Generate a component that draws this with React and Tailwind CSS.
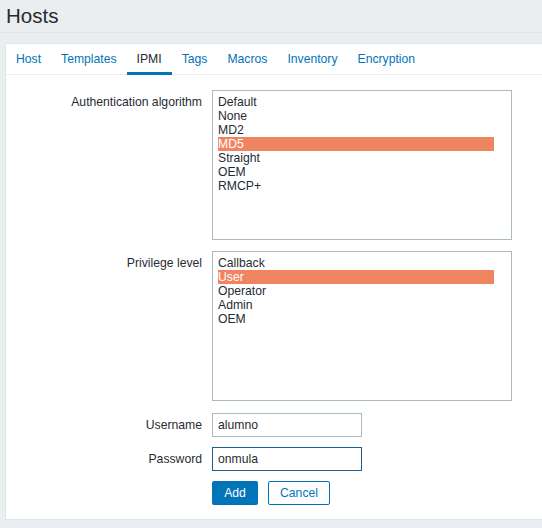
import React from 'react';

const tabs = ['Host', 'Templates', 'IPMI', 'Tags', 'Macros', 'Inventory', 'Encryption'];
const authOptions = ['Default', 'None', 'MD2', 'MD5', 'Straight', 'OEM', 'RMCP+'];
const privOptions = ['Callback', 'User', 'Operator', 'Admin', 'OEM'];

const ListBox = ({ options, selected }) => (
    <div className="w-[300px] h-[150px] border border-[#acbbc2] bg-white pl-[5px] pr-[17px] pt-[4px]">
        {options.map((opt) => (
            <div
                key={opt}
                className={`leading-[14px] h-[14px] ${opt === selected ? 'bg-[#f08360] text-white' : ''}`}
            >
                {opt}
            </div>
        ))}
    </div>
);

const App = () => {
    return (
        <div
            className="w-[542px] h-[528px] bg-[#ebeef0] overflow-hidden text-[12.2px] text-[#1f2c33]"
            style={{ fontFamily: '"Liberation Sans", Arial, sans-serif' }}
        >
            {/* Page header */}
            <div className="h-[33px] border-b border-[#dfe4e7] px-[6px] pt-[4px]">
                <h1 className="text-[20.5px] leading-[24px] font-normal">Hosts</h1>
            </div>

            {/* Form panel */}
            <div className="mt-[10px] ml-[5px] w-[560px] h-[477px] bg-white border border-[#dfe4e7]">
                <div className="flex h-[31px] border-b border-[#ebeef0]">
                    {tabs.map((tab) => (
                        <div
                            key={tab}
                            className={`px-[10px] flex items-center h-[31px] ${
                                tab === 'IPMI'
                                    ? 'border-b-[3px] border-[#0275b8] text-[#1f2c33] pt-[3px]'
                                    : 'text-[#0275b8]'
                            }`}
                        >
                            {tab}
                        </div>
                    ))}
                </div>

                <div className="grid grid-cols-[196px_1fr] gap-x-[10px] mt-[15px]">
                    <div className="text-right pt-[5px] leading-[14px]">Authentication algorithm</div>
                    <ListBox options={authOptions} selected="MD5" />

                    <div className="text-right pt-[5px] leading-[14px] mt-[11px]">Privilege level</div>
                    <div className="mt-[11px]">
                        <ListBox options={privOptions} selected="User" />
                    </div>

                    <div className="text-right mt-[12px] h-[24px] leading-[24px]">Username</div>
                    <div className="mt-[12px]">
                        <div className="w-[150px] h-[24px] border border-[#acbbc2] px-[5px] leading-[22px]">alumno</div>
                    </div>

                    <div className="text-right mt-[10px] h-[24px] leading-[24px]">Password</div>
                    <div className="mt-[10px]">
                        <div className="w-[150px] h-[24px] border border-[#1e5f91] px-[5px] leading-[22px]">onmula</div>
                    </div>

                    <div />
                    <div className="flex gap-[10px] mt-[10px]">
                        <button className="w-[46px] h-[24px] bg-[#0275b8] text-white rounded-[2px] text-[12.2px]">Add</button>
                        <button className="w-[62px] h-[24px] bg-white border border-[#0275b8] text-[#0275b8] rounded-[2px] text-[12.2px]">Cancel</button>
                    </div>
                </div>
            </div>
        </div>
    );
};

export default App;
